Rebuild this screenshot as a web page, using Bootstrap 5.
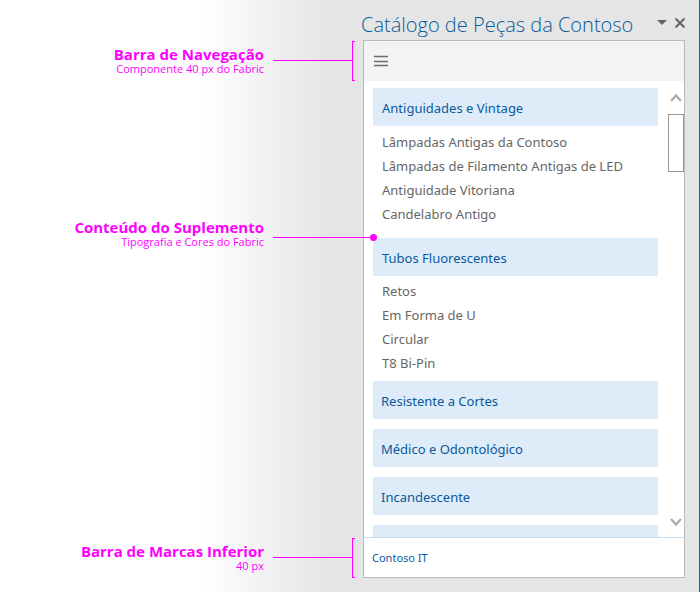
<!DOCTYPE html>
<html lang="pt-BR">
<head>
<meta charset="utf-8">
<meta name="viewport" content="width=device-width, initial-scale=1">
<title>Catálogo de Peças da Contoso</title>
<link href="https://cdn.jsdelivr.net/npm/bootstrap@5.3.0/dist/css/bootstrap.min.css" rel="stylesheet">
<style>
  body { font-family: "Noto Sans", "Open Sans", sans-serif; font-size: 13px; line-height: 24px; color: #666; }
  .stage {
    display: grid;
    height: 100vh;
    grid-template-columns: minmax(0, 363fr) minmax(0, 322fr);
    grid-template-rows: 40px 41px minmax(0, 1fr) 41px;
    padding: 0 14px 14px 0;
    border-right: 1px solid #2b579a;
    background: linear-gradient(to right, #fff 29%, #f3f3f3 37%, #e5e5e5 47%);
  }
  .pane-title { grid-area: 1 / 2; padding-top: 10px; }
  .pane-title h1 { font-family: "Open Sans", "Noto Sans", sans-serif; font-weight: 300; font-size: 20px; line-height: 30px; color: #0a5a9c; margin-left: -2px; }
  .pane { grid-area: 2 / 2 / 5 / 3; border: 1px solid #b9b9b9; }
  .title-tools { padding: 0 0 4px; }
  .pane-nav { height: 40px; background: #f3f3f3; padding-left: 10px; }
  .plain-btn { border: 0; background: none; padding: 0; line-height: 0; }
  .catalog { padding: 7px 10px 0 9px; }
  .group-btn { height: 38px; border: 0; background: #deebf9; color: #0a5a9c; padding: 1px 9px 0; text-align: left; flex: none; }
  .group-btn.closed { margin-bottom: 10px; padding-left: 8px; }
  .group-items { padding: 4px 9px 12px; margin: 0; }
  .group-items.tight { padding: 3px 9px 6px; }
  .group-items a { color: #666; text-decoration: none; }
  .scroll { width: 16px; padding: 12px 0 10px; }
  .thumb { width: 16px; height: 58px; margin-top: 11px; border: 1px solid #999; background: #fff; }
  .brand-bar { height: 40px; border-top: 1px solid #c7dff0; padding-left: 8px; font-size: 11px; color: #0a5a9c; background: #fff; }
  .callout { grid-column: 1; color: #f0f; z-index: 1; }
  .callout-nav { grid-row: 2; }
  .callout-content { grid-row: 3; height: 40px; margin: 136px -14px 0 0; }
  .callout-content .callout-text { padding-bottom: 8px; }
  .callout-brand { grid-row: 4; }
  .callout-text { width: 264px; flex: none; text-align: right; padding-top: 1px; font-family: "Open Sans", "Noto Sans", sans-serif; }
  .callout-text strong { display: block; font-size: 15px; line-height: 16px; }
  .callout-text small { display: block; font-size: 11px; line-height: 14px; }
  .leader { height: 1px; background: #f0f; margin-left: 9px; }
  .bracket { width: 3px; height: 40px; border: 1px solid #f0f; border-right: 0; margin-right: 8px; }
  .dot { width: 7px; height: 7px; border-radius: 50%; background: #f0f; }
</style>
</head>
<body>
<main class="stage">
  <header class="pane-title d-flex align-items-center justify-content-between">
    <h1 class="mb-0 text-nowrap">Catálogo de Peças da Contoso</h1>
    <div class="title-tools d-flex align-items-center gap-2">
      <button class="plain-btn" type="button" aria-label="Opções do painel"><svg width="10" height="6"><path d="M0 0h10L5 5z" fill="#666"/></svg></button>
      <button class="plain-btn" type="button" aria-label="Fechar"><svg width="10" height="10"><path d="M0.500 0.500l9 9M9.500 0.500l-9 9" stroke="#666" stroke-width="2"/></svg></button>
    </div>
  </header>

  <section class="pane d-flex flex-column bg-white">
    <nav class="pane-nav d-flex align-items-center flex-shrink-0">
      <button class="plain-btn" type="button" aria-label="Menu"><svg width="14" height="12"><path d="M0 1.500h14M0 6.500h14M0 10.500h14" stroke="#6b6b6b" stroke-width="1.400"/></svg></button>
    </nav>
    <div class="d-flex flex-grow-1 overflow-hidden">
      <div class="catalog d-flex flex-column flex-grow-1 overflow-hidden">
        <button class="group-btn" type="button">Antiguidades e Vintage</button>
        <ul class="group-items list-unstyled">
          <li><a href="#">Lâmpadas Antigas da Contoso</a></li>
          <li><a href="#">Lâmpadas de Filamento Antigas de LED</a></li>
          <li><a href="#">Antiguidade Vitoriana</a></li>
          <li><a href="#">Candelabro Antigo</a></li>
        </ul>
        <button class="group-btn" type="button">Tubos Fluorescentes</button>
        <ul class="group-items tight list-unstyled">
          <li><a href="#">Retos</a></li>
          <li><a href="#">Em Forma de U</a></li>
          <li><a href="#">Circular</a></li>
          <li><a href="#">T8 Bi-Pin</a></li>
        </ul>
        <button class="group-btn closed" type="button">Resistente a Cortes</button>
        <button class="group-btn closed" type="button">Médico e Odontológico</button>
        <button class="group-btn closed" type="button">Incandescente</button>
        <button class="group-btn closed" type="button" aria-label="Próxima categoria"></button>
      </div>
      <div class="scroll d-flex flex-column align-items-center flex-shrink-0">
        <button class="plain-btn" type="button" aria-label="Rolar para cima"><svg width="12" height="10"><path d="M1 8l5-5.500L11 8" fill="none" stroke="#aaa" stroke-width="2.200"/></svg></button>
        <div class="thumb"></div>
        <button class="plain-btn mt-auto" type="button" aria-label="Rolar para baixo"><svg width="12" height="10"><path d="M1 2l5 5.500L11 2" fill="none" stroke="#aaa" stroke-width="2.200"/></svg></button>
      </div>
    </div>
    <footer class="brand-bar d-flex align-items-center flex-shrink-0">Contoso IT</footer>
  </section>

  <div class="callout callout-nav d-flex align-items-center">
    <div class="callout-text"><strong>Barra de Navegação</strong><small>Componente 40 px do Fabric</small></div>
    <div class="leader flex-grow-1"></div><div class="bracket"></div>
  </div>
  <div class="callout callout-content d-flex align-items-center">
    <div class="callout-text"><strong>Conteúdo do Suplemento</strong><small>Tipografia e Cores do Fabric</small></div>
    <div class="leader flex-grow-1"></div><div class="dot"></div>
  </div>
  <div class="callout callout-brand d-flex align-items-center">
    <div class="callout-text"><strong>Barra de Marcas Inferior</strong><small>40 px</small></div>
    <div class="leader flex-grow-1"></div><div class="bracket"></div>
  </div>
</main>
<script src="https://cdn.jsdelivr.net/npm/bootstrap@5.3.0/dist/js/bootstrap.bundle.min.js"></script>
</body>
</html>
